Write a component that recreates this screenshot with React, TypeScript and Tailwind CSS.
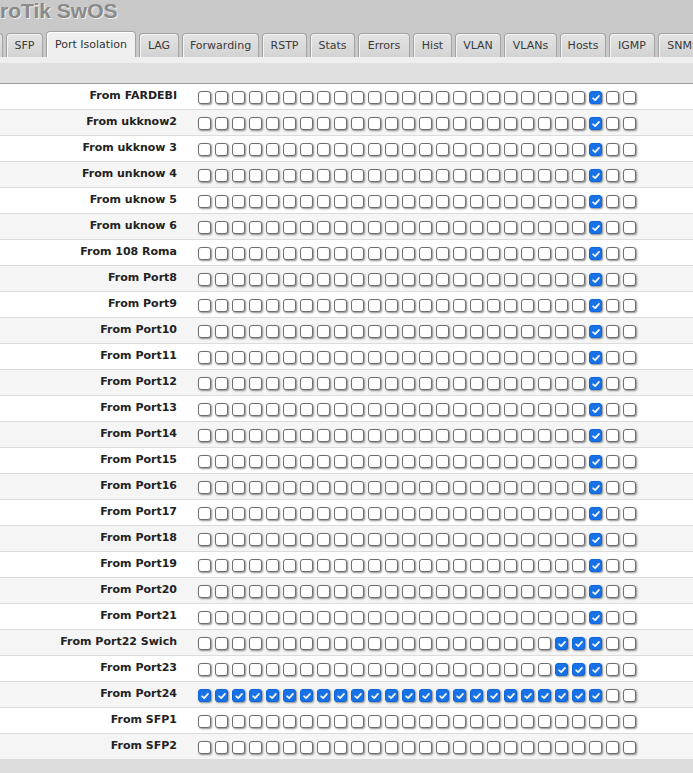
const tabs = [
  { label: "System", w: "w-[60px]" },
  { label: "SFP", w: "w-[37px]" },
  { label: "Port Isolation", w: "w-[90px]" },
  { label: "LAG", w: "w-[40px]" },
  { label: "Forwarding", w: "w-[77px]" },
  { label: "RSTP", w: "w-[45px]" },
  { label: "Stats", w: "w-[45px]" },
  { label: "Errors", w: "w-[52px]" },
  { label: "Hist", w: "w-[39px]" },
  { label: "VLAN", w: "w-[46px]" },
  { label: "VLANs", w: "w-[53px]" },
  { label: "Hosts", w: "w-[46px]" },
  { label: "IGMP", w: "w-[46px]" },
  { label: "SNMP", w: "w-[50px]" },
];

const names = [
  "FARDEBI",
  "ukknow2",
  "ukknow 3",
  "unknow 4",
  "uknow 5",
  "uknow 6",
  "108 Roma",
  "Port8",
  "Port9",
  "Port10",
  "Port11",
  "Port12",
  "Port13",
  "Port14",
  "Port15",
  "Port16",
  "Port17",
  "Port18",
  "Port19",
  "Port20",
  "Port21",
  "Port22 Swich",
  "Port23",
  "Port24",
  "SFP1",
  "SFP2",
];

function isChecked(row: number, col: number) {
  if (row === 23) return col < 24;
  if (row === 21 || row === 22) return col >= 21 && col <= 23;
  if (row < 21) return col === 23;
  return false;
}

function Box({ checked }: { checked: boolean }) {
  return (
    <span
      className={
        "flex h-[13px] w-[13px] items-center justify-center rounded-[3px] border shadow-[1px_1px_2px_rgba(0,0,0,0.45)] " +
        (checked ? "border-[#0f66d8] bg-[#1672e6]" : "border-[#6e6e6e] bg-white")
      }
    >
      {checked && (
        <svg viewBox="0 0 12 12" className="h-[10px] w-[10px]">
          <path d="M2.5 6.3 L5 8.6 L9.6 3.4" fill="none" stroke="white" strokeWidth="2" strokeLinecap="round" strokeLinejoin="round" />
        </svg>
      )}
    </span>
  );
}

export default function App() {
  return (
    <div className="h-[773px] w-[693px] overflow-hidden bg-white font-['DejaVu_Sans',sans-serif] text-[#222]">
      <div className="bg-[#c9c9c9]">
        <div className="h-[31px] overflow-hidden whitespace-nowrap">
          <span className="-ml-[35px] block font-['Liberation_Sans',sans-serif] text-[21px] leading-[22px] font-bold text-[#8a8a8a] [text-shadow:1px_1px_0_#ececec]">
            MikroTik SwOS
          </span>
        </div>
        <div className="-ml-[57px] flex h-[26px] items-end gap-[3px] whitespace-nowrap">
          {tabs.map((t) =>
            t.label === "Port Isolation" ? (
              <div
                key={t.label}
                className={
                  "flex h-[26px] shrink-0 items-center justify-center rounded-t-[4px] border border-b-0 border-[#a3a3a3] bg-[#efefef] pt-[1px] text-[11px] text-[#333] shadow-[inset_1px_1px_0_#fff] " +
                  t.w
                }
              >
                {t.label}
              </div>
            ) : (
              <div
                key={t.label}
                className={
                  "flex h-[24px] shrink-0 items-center justify-center overflow-hidden rounded-t-[4px] border border-b-0 border-[#a3a3a3] bg-gradient-to-b from-[#e4e4e4] to-[#d3d3d3] pt-[1px] text-[11px] text-[#3a3a3a] shadow-[inset_1px_1px_0_#f4f4f4] " +
                  t.w
                }
              >
                {t.label}
              </div>
            )
          )}
        </div>
      </div>
      <div className="h-[6px] bg-[#efefef]" />
      <div className="h-[21px] border-b border-[#9c9c9c] bg-[#e0e0e0]" />
      <div>
        {names.map((n, r) => (
          <div
            key={n}
            className={
              "flex h-[26px] items-center border-b border-[#dcdcdc] " + (r % 2 === 1 ? "bg-[#f5f5f5]" : "bg-white")
            }
          >
            <div className="w-[178px] pr-[1px] text-right text-[11px] font-bold whitespace-nowrap">From {n}</div>
            <div className="ml-[20px] flex gap-[4px] pt-[2px]">
              {Array.from({ length: 26 }).map((_, c) => (
                <Box key={c} checked={isChecked(r, c)} />
              ))}
            </div>
          </div>
        ))}
      </div>
      <div className="h-[20px] bg-[#dcdcdc]" />
    </div>
  );
}
